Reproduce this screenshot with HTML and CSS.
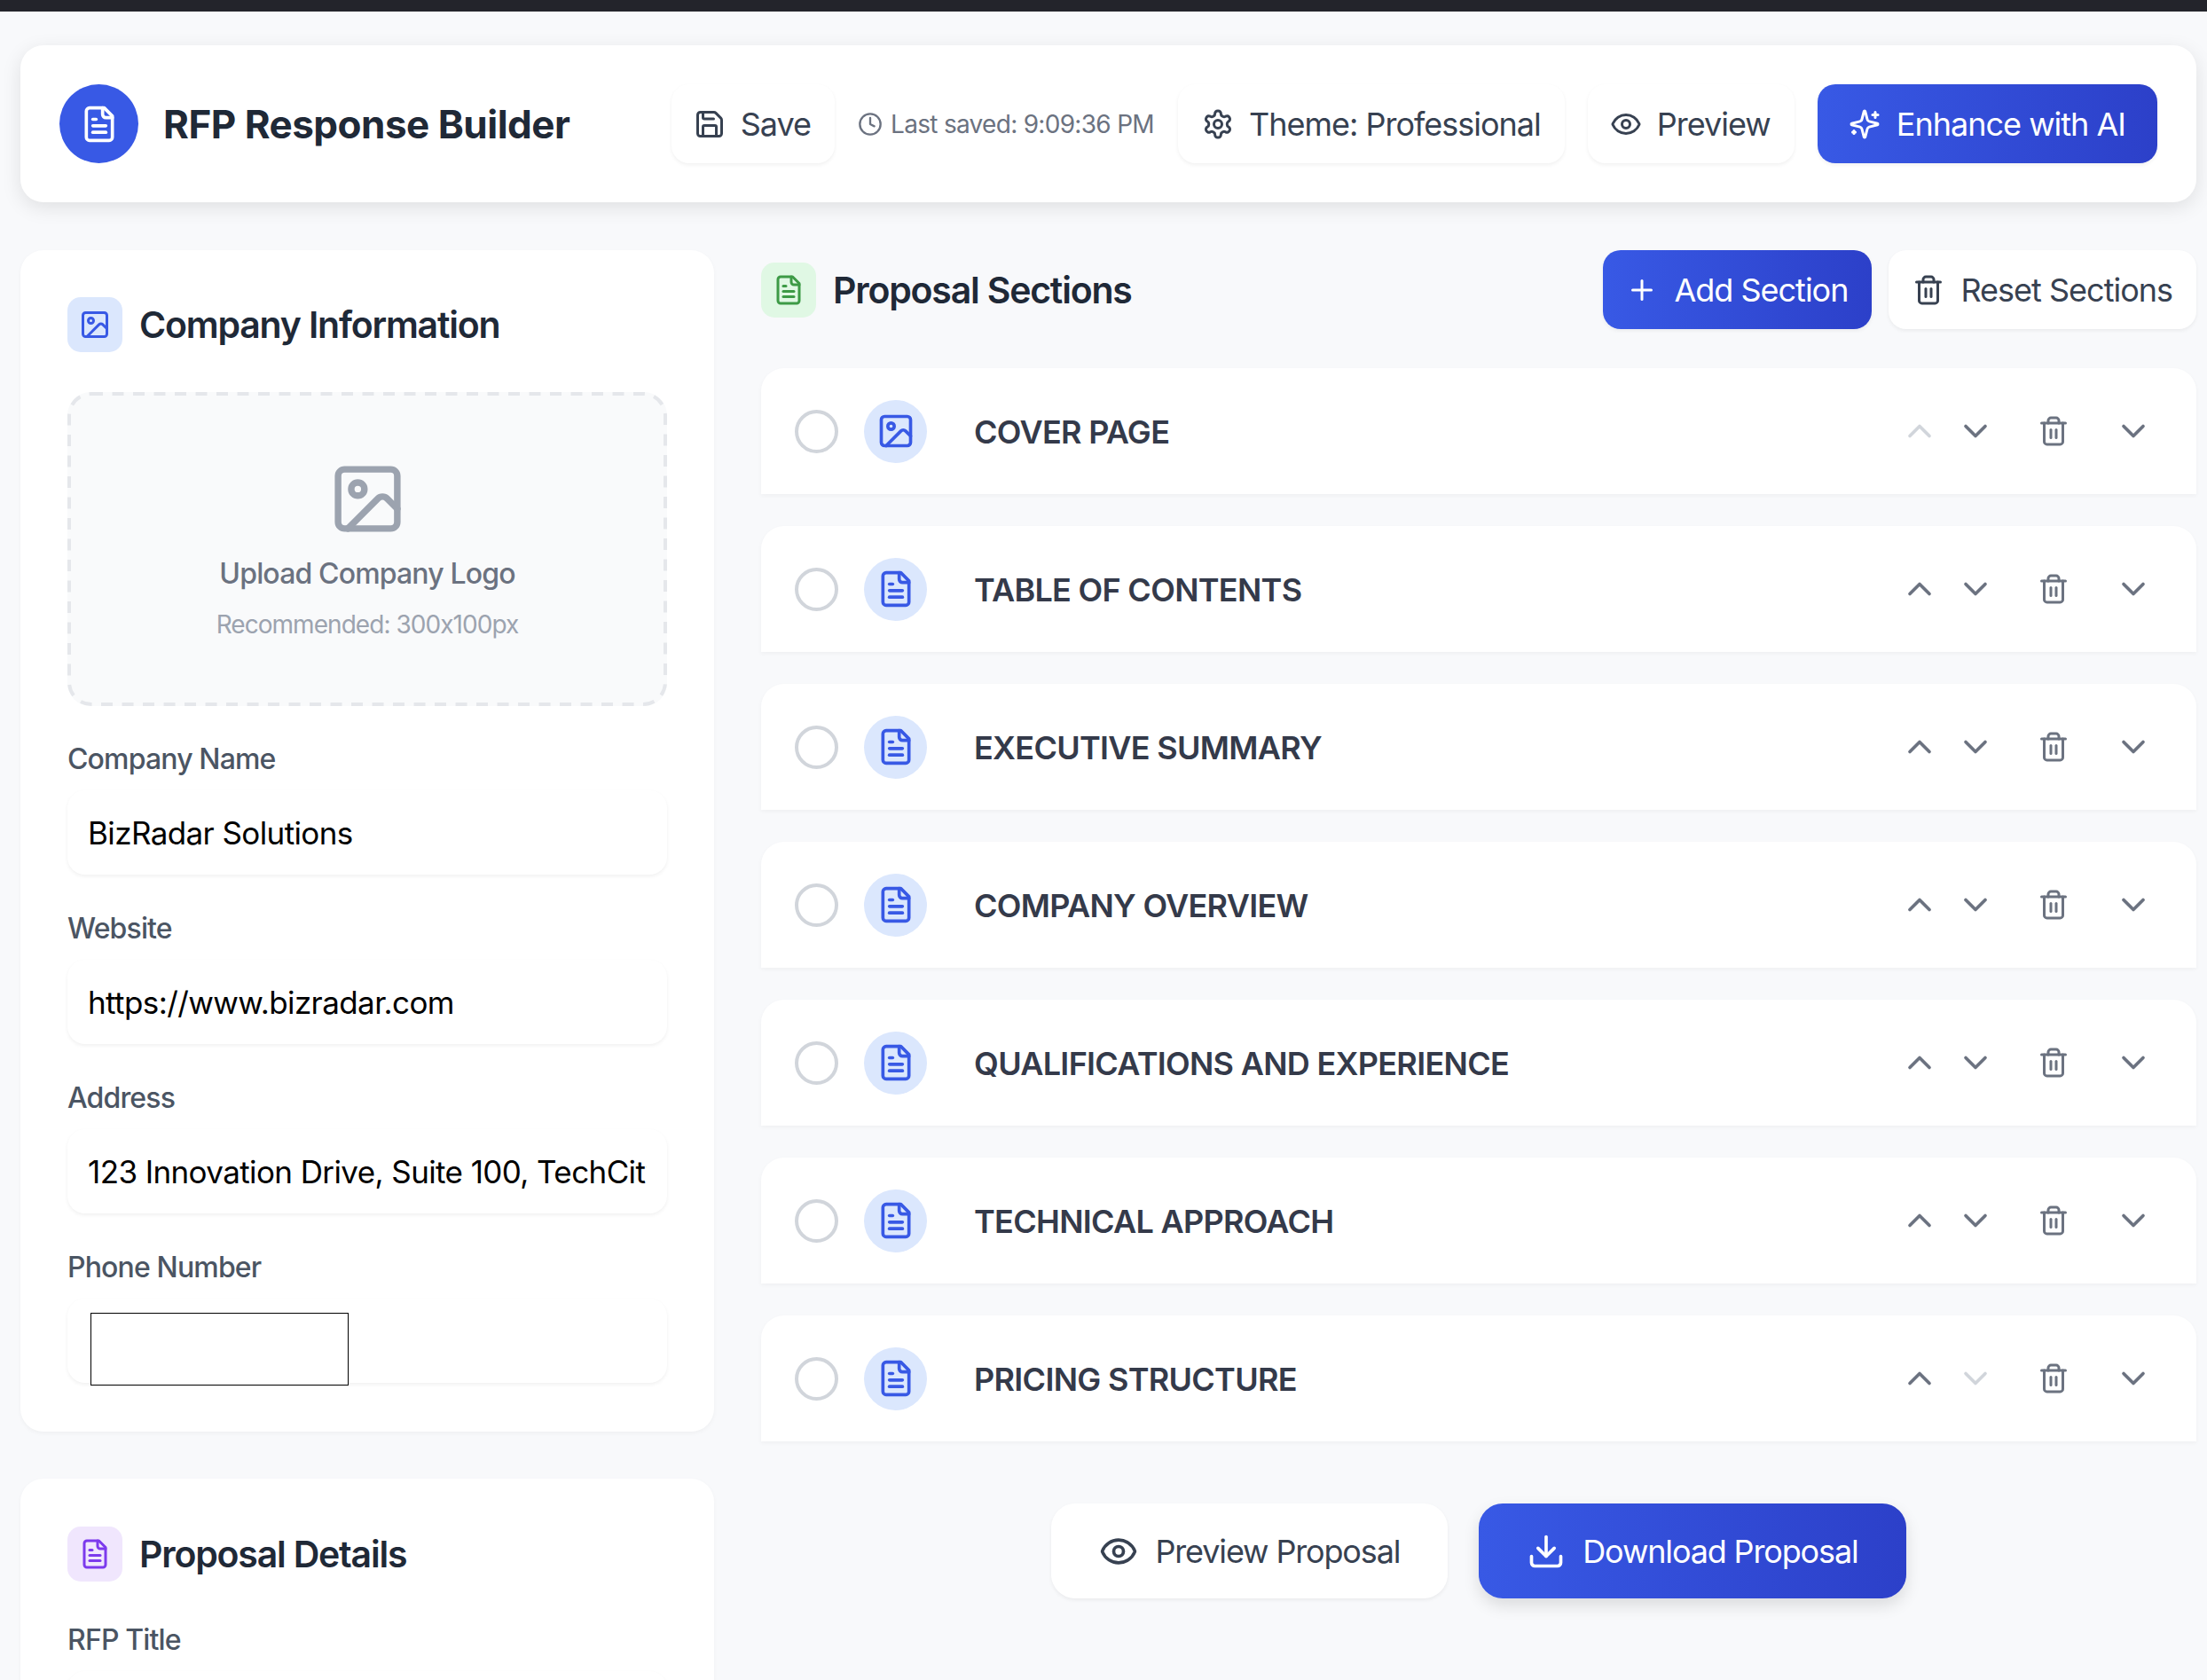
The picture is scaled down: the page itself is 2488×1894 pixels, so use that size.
FILE: index.html
```html
<!DOCTYPE html>
<html lang="en">
<head>
    <meta charset="UTF-8">
    <meta name="viewport" content="width=device-width, initial-scale=1.0">
    <title>RFP Response Builder</title>
    <link rel="stylesheet" href="styles.css">
</head>
<body>
<svg class="sprite" xmlns="http://www.w3.org/2000/svg">
    <symbol id="i-doc" viewBox="0 0 24 24"><path d="M15 2H6a2 2 0 0 0-2 2v16a2 2 0 0 0 2 2h12a2 2 0 0 0 2-2V7Z"/><path d="M14 2v4a2 2 0 0 0 2 2h4"/><path d="M10 9H8"/><path d="M16 13H8"/><path d="M16 17H8"/></symbol>
    <symbol id="i-image" viewBox="0 0 24 24"><rect x="3" y="3" width="18" height="18" rx="2"/><circle cx="9" cy="9" r="2"/><path d="m21 15-3.086-3.086a2 2 0 0 0-2.828 0L6 21"/></symbol>
    <symbol id="i-save" viewBox="0 0 24 24"><path d="M15.2 3a2 2 0 0 1 1.4.6l3.8 3.8a2 2 0 0 1 .6 1.4V19a2 2 0 0 1-2 2H5a2 2 0 0 1-2-2V5a2 2 0 0 1 2-2z"/><path d="M17 21v-7a1 1 0 0 0-1-1H8a1 1 0 0 0-1 1v7"/><path d="M7 3v4a1 1 0 0 0 1 1h7"/></symbol>
    <symbol id="i-clock" viewBox="0 0 24 24"><circle cx="12" cy="12" r="10"/><path d="M12 6v6l4 2"/></symbol>
    <symbol id="i-gear" viewBox="0 0 24 24"><path d="M12.22 2h-.44a2 2 0 0 0-2 2v.18a2 2 0 0 1-1 1.73l-.43.25a2 2 0 0 1-2 0l-.15-.08a2 2 0 0 0-2.73.73l-.22.38a2 2 0 0 0 .73 2.73l.15.1a2 2 0 0 1 1 1.72v.51a2 2 0 0 1-1 1.74l-.15.09a2 2 0 0 0-.73 2.73l.22.38a2 2 0 0 0 2.73.73l.15-.08a2 2 0 0 1 2 0l.43.25a2 2 0 0 1 1 1.73V20a2 2 0 0 0 2 2h.44a2 2 0 0 0 2-2v-.18a2 2 0 0 1 1-1.73l.43-.25a2 2 0 0 1 2 0l.15.08a2 2 0 0 0 2.73-.73l.22-.39a2 2 0 0 0-.73-2.73l-.15-.08a2 2 0 0 1-1-1.74v-.5a2 2 0 0 1 1-1.74l.15-.09a2 2 0 0 0 .73-2.73l-.22-.38a2 2 0 0 0-2.73-.73l-.15.08a2 2 0 0 1-2 0l-.43-.25a2 2 0 0 1-1-1.73V4a2 2 0 0 0-2-2z"/><circle cx="12" cy="12" r="3"/></symbol>
    <symbol id="i-eye" viewBox="0 0 24 24"><path d="M2.062 12.348a1 1 0 0 1 0-.696 10.75 10.75 0 0 1 19.876 0 1 1 0 0 1 0 .696 10.75 10.75 0 0 1-19.876 0"/><circle cx="12" cy="12" r="3"/></symbol>
    <symbol id="i-spark" viewBox="0 0 24 24"><path d="M9.937 15.5A2 2 0 0 0 8.5 14.063l-6.135-1.582a.5.5 0 0 1 0-.962L8.5 9.936A2 2 0 0 0 9.937 8.5l1.582-6.135a.5.5 0 0 1 .963 0L14.063 8.5A2 2 0 0 0 15.5 9.937l6.135 1.581a.5.5 0 0 1 0 .964L15.5 14.063a2 2 0 0 0-1.437 1.437l-1.582 6.135a.5.5 0 0 1-.963 0z"/><path d="M20 3v4"/><path d="M22 5h-4"/><path d="M4 17v2"/><path d="M5 18H3"/></symbol>
    <symbol id="i-plus" viewBox="0 0 24 24"><path d="M5 12h14"/><path d="M12 5v14"/></symbol>
    <symbol id="i-trash" viewBox="0 0 24 24"><path d="M3 6h18"/><path d="M19 6v14c0 1-1 2-2 2H7c-1 0-2-1-2-2V6"/><path d="M8 6V4c0-1 1-2 2-2h4c1 0 2 1 2 2v2"/><path d="M10 11v6"/><path d="M14 11v6"/></symbol>
    <symbol id="i-up" viewBox="0 0 24 24"><path d="m18 15-6-6-6 6"/></symbol>
    <symbol id="i-down" viewBox="0 0 24 24"><path d="m6 9 6 6 6-6"/></symbol>
    <symbol id="i-download" viewBox="0 0 24 24"><path d="M21 15v4a2 2 0 0 1-2 2H5a2 2 0 0 1-2-2v-4"/><path d="m7 10 5 5 5-5"/><path d="M12 15V3"/></symbol>
</svg>

<div class="topbar"></div>

<div class="page">
    <header class="header">
        <div class="brand">
            <div class="brand-icon"><svg class="icon icon-row"><use href="#i-doc"/></svg></div>
            <h1>RFP Response Builder</h1>
        </div>
        <div class="header-actions">
            <button class="btn"><svg class="icon"><use href="#i-save"/></svg>Save</button>
            <span class="last-saved"><svg class="icon icon-sm"><use href="#i-clock"/></svg>Last saved: 9:09:36 PM</span>
            <button class="btn btn-theme"><svg class="icon"><use href="#i-gear"/></svg>Theme: Professional</button>
            <button class="btn"><svg class="icon"><use href="#i-eye"/></svg>Preview</button>
            <button class="btn btn-primary btn-enhance"><svg class="icon"><use href="#i-spark"/></svg>Enhance with AI</button>
        </div>
    </header>

    <div class="columns">
        <aside class="sidebar">
            <section class="card">
                <div class="card-title">
                    <span class="title-icon tint-blue"><svg class="icon icon-title"><use href="#i-image"/></svg></span>
                    <h2>Company Information</h2>
                </div>
                <div class="dropzone">
                    <svg class="dash" width="676" height="354"><rect x="2" y="2" width="672" height="350" rx="25"/></svg>
                    <svg class="icon icon-upload"><use href="#i-image"/></svg>
                    <p class="drop-main">Upload Company Logo</p>
                    <p class="drop-hint">Recommended: 300x100px</p>
                </div>
                <label class="field-label">Company Name</label>
                <input class="field" type="text" value="BizRadar Solutions">
                <label class="field-label">Website</label>
                <input class="field" type="text" value="https://www.bizradar.com">
                <label class="field-label">Address</label>
                <input class="field" type="text" value="123 Innovation Drive, Suite 100, TechCity, CA 94000">
                <label class="field-label">Phone Number</label>
                <div class="field phone-wrap"><input class="phone-input" type="text"></div>
            </section>

            <section class="card">
                <div class="card-title">
                    <span class="title-icon tint-purple"><svg class="icon icon-title"><use href="#i-doc"/></svg></span>
                    <h2>Proposal Details</h2>
                </div>
                <label class="field-label">RFP Title</label>
                <input class="field" type="text">
            </section>
        </aside>

        <main class="sections">
            <div class="sections-head">
                <span class="title-icon tint-green"><svg class="icon icon-title"><use href="#i-doc"/></svg></span>
                <h2>Proposal Sections</h2>
                <button class="btn btn-primary btn-add"><svg class="icon"><use href="#i-plus"/></svg>Add Section</button>
                <button class="btn btn-reset"><svg class="icon"><use href="#i-trash"/></svg>Reset Sections</button>
            </div>

            <div class="row">
                <span class="radio"></span>
                <span class="row-icon"><svg class="icon icon-row"><use href="#i-image"/></svg></span>
                <span class="row-title">Cover Page</span>
                <div class="row-tools">
                    <svg class="icon icon-chev off"><use href="#i-up"/></svg>
                    <svg class="icon icon-chev"><use href="#i-down"/></svg>
                    <svg class="icon icon-trash"><use href="#i-trash"/></svg>
                    <svg class="icon icon-chev"><use href="#i-down"/></svg>
                </div>
            </div>
            <div class="row">
                <span class="radio"></span>
                <span class="row-icon"><svg class="icon icon-row"><use href="#i-doc"/></svg></span>
                <span class="row-title">Table of Contents</span>
                <div class="row-tools">
                    <svg class="icon icon-chev"><use href="#i-up"/></svg>
                    <svg class="icon icon-chev"><use href="#i-down"/></svg>
                    <svg class="icon icon-trash"><use href="#i-trash"/></svg>
                    <svg class="icon icon-chev"><use href="#i-down"/></svg>
                </div>
            </div>
            <div class="row">
                <span class="radio"></span>
                <span class="row-icon"><svg class="icon icon-row"><use href="#i-doc"/></svg></span>
                <span class="row-title">Executive Summary</span>
                <div class="row-tools">
                    <svg class="icon icon-chev"><use href="#i-up"/></svg>
                    <svg class="icon icon-chev"><use href="#i-down"/></svg>
                    <svg class="icon icon-trash"><use href="#i-trash"/></svg>
                    <svg class="icon icon-chev"><use href="#i-down"/></svg>
                </div>
            </div>
            <div class="row">
                <span class="radio"></span>
                <span class="row-icon"><svg class="icon icon-row"><use href="#i-doc"/></svg></span>
                <span class="row-title">Company Overview</span>
                <div class="row-tools">
                    <svg class="icon icon-chev"><use href="#i-up"/></svg>
                    <svg class="icon icon-chev"><use href="#i-down"/></svg>
                    <svg class="icon icon-trash"><use href="#i-trash"/></svg>
                    <svg class="icon icon-chev"><use href="#i-down"/></svg>
                </div>
            </div>
            <div class="row">
                <span class="radio"></span>
                <span class="row-icon"><svg class="icon icon-row"><use href="#i-doc"/></svg></span>
                <span class="row-title">Qualifications and Experience</span>
                <div class="row-tools">
                    <svg class="icon icon-chev"><use href="#i-up"/></svg>
                    <svg class="icon icon-chev"><use href="#i-down"/></svg>
                    <svg class="icon icon-trash"><use href="#i-trash"/></svg>
                    <svg class="icon icon-chev"><use href="#i-down"/></svg>
                </div>
            </div>
            <div class="row">
                <span class="radio"></span>
                <span class="row-icon"><svg class="icon icon-row"><use href="#i-doc"/></svg></span>
                <span class="row-title">Technical Approach</span>
                <div class="row-tools">
                    <svg class="icon icon-chev"><use href="#i-up"/></svg>
                    <svg class="icon icon-chev"><use href="#i-down"/></svg>
                    <svg class="icon icon-trash"><use href="#i-trash"/></svg>
                    <svg class="icon icon-chev"><use href="#i-down"/></svg>
                </div>
            </div>
            <div class="row">
                <span class="radio"></span>
                <span class="row-icon"><svg class="icon icon-row"><use href="#i-doc"/></svg></span>
                <span class="row-title">Pricing Structure</span>
                <div class="row-tools">
                    <svg class="icon icon-chev"><use href="#i-up"/></svg>
                    <svg class="icon icon-chev off"><use href="#i-down"/></svg>
                    <svg class="icon icon-trash"><use href="#i-trash"/></svg>
                    <svg class="icon icon-chev"><use href="#i-down"/></svg>
                </div>
            </div>

            <div class="footer-actions">
                <button class="btn btn-big"><svg class="icon icon-big"><use href="#i-eye"/></svg>Preview Proposal</button>
                <button class="btn btn-primary btn-big btn-glow"><svg class="icon icon-big"><use href="#i-download"/></svg>Download Proposal</button>
            </div>
        </main>
    </div>
</div>
</body>
</html>
```

FILE: styles.css
```css
* {
    box-sizing: border-box;
    font-feature-settings: "calt" 0;
}
html, body {
    margin: 0;
    height: 1894px;
    overflow: hidden;
}
body {
    font-family: Inter, "Noto Sans", sans-serif;
    background-color: #f8f9fb;
    color: #1f2937;
}
.sprite {
    display: none;
}
.topbar {
    height: 13px;
    background: #23242b;
}
.page {
    padding: 38px 12px 0 23px;
}
.icon {
    width: 36px;
    height: 36px;
    flex: none;
    fill: none;
    stroke: currentColor;
    stroke-width: 2;
    stroke-linecap: round;
    stroke-linejoin: round;
}
.icon-sm {
    width: 28px;
    height: 28px;
}
.icon-title {
    width: 36px;
    height: 36px;
}
.icon-row {
    width: 44px;
    height: 44px;
}
.icon-upload {
    width: 89px;
    height: 89px;
    color: #9ca3af;
}
.icon-big {
    width: 44px;
    height: 44px;
}

/* buttons */
.btn {
    display: inline-flex;
    align-items: center;
    gap: 17px;
    height: 89px;
    padding: 0 27px 0 25px;
    font-family: inherit;
    font-size: 36px;
    letter-spacing: -1px;
    color: #374151;
    background: #fff;
    border: none;
    border-radius: 20px;
    box-shadow: 0 2px 4px rgba(0, 0, 0, 0.06);
    white-space: nowrap;
}
.btn-primary {
    color: #fff;
    background: linear-gradient(90deg, #3859e5, #2c40c9);
}
.btn-theme {
    padding-left: 27px;
}
.btn-enhance {
    gap: 18px;
    padding: 0 36px 0 35px;
}
.btn-add {
    gap: 18px;
    padding: 0 27px 0 26px;
}
.btn-reset {
    gap: 18px;
    padding: 0 27px;
}
.btn-big {
    height: 107px;
    padding: 0 54px;
    gap: 19px;
    letter-spacing: -1.15px;
    border-radius: 27px;
}
.btn-glow {
    box-shadow: 0 8px 18px rgba(0, 0, 0, 0.12);
}

/* header */
.header {
    display: flex;
    align-items: center;
    justify-content: space-between;
    height: 177px;
    padding: 0 44px;
    background: #fff;
    border-radius: 26px;
    box-shadow: 0 6px 22px rgba(0, 0, 0, 0.1);
}
.brand {
    display: flex;
    align-items: center;
    gap: 28px;
}
.brand-icon {
    display: flex;
    align-items: center;
    justify-content: center;
    width: 89px;
    height: 89px;
    color: #fff;
    background: #3859e5;
    border-radius: 50%;
}
h1 {
    margin: 0;
    font-size: 44px;
    font-weight: 700;
    letter-spacing: -0.5px;
    color: #1f2937;
}
.header-actions {
    display: flex;
    align-items: center;
    gap: 26px;
}
.last-saved {
    display: flex;
    align-items: center;
    gap: 9px;
    margin-right: 1px;
    font-size: 28px;
    letter-spacing: -0.7px;
    color: #6b7280;
}

/* columns */
.columns {
    display: grid;
    grid-template-columns: 782px 1fr;
    gap: 53px;
    margin-top: 54px;
}
.card {
    padding: 53px 53px 55px;
    margin-bottom: 53px;
    background: #fff;
    border-radius: 26px;
    box-shadow: 0 2px 5px rgba(0, 0, 0, 0.04);
}
.card + .card {
    padding-top: 54px;
}
.card-title {
    display: flex;
    align-items: center;
    gap: 19px;
    margin-bottom: 45px;
}
.card-title + .field-label {
    margin-top: 9px;
}
h2 {
    margin: 0;
    font-size: 41px;
    font-weight: 600;
    letter-spacing: -1.2px;
    color: #1f2937;
}
.title-icon {
    display: flex;
    align-items: center;
    justify-content: center;
    width: 62px;
    height: 62px;
    border-radius: 15px;
}
.tint-blue {
    background: #dbe7fd;
    color: #3859e5;
}
.tint-purple {
    background: #f0e6fd;
    color: #7c3aed;
}
.tint-green {
    background: #e0f8e4;
    color: #3d9a46;
}

/* upload box */
.dropzone {
    position: relative;
    display: flex;
    flex-direction: column;
    align-items: center;
    justify-content: center;
    height: 354px;
    margin-bottom: 39px;
    background: #f9fafb;
    border-radius: 26px;
}
.dash {
    position: absolute;
    top: 0;
    left: 0;
}
.dash rect {
    fill: none;
    stroke: #e5e7eb;
    stroke-width: 4;
    stroke-dasharray: 13 10.5;
}
.drop-main {
    margin: 20px 0 0;
    font-size: 32px;
    font-weight: 500;
    letter-spacing: -0.85px;
    color: #6b7280;
}
.drop-hint {
    margin: 21px 0 0;
    font-size: 28px;
    letter-spacing: -0.95px;
    color: #9ca3af;
}

/* form */
.field-label {
    display: block;
    height: 41px;
    margin-bottom: 15px;
    line-height: 41px;
    font-size: 32px;
    font-weight: 500;
    letter-spacing: -0.85px;
    color: #4b5563;
}
.field {
    display: block;
    width: 100%;
    height: 95px;
    margin-bottom: 40px;
    padding: 0 23px;
    font-family: inherit;
    font-size: 35px;
    letter-spacing: -0.6px;
    color: #000;
    background: #fff;
    border: none;
    border-radius: 20px;
    box-shadow: 0 2px 4px rgba(0, 0, 0, 0.06);
    outline: none;
}
.field:last-child {
    margin-bottom: 0;
}
.phone-wrap {
    padding: 16px 0 0 26px;
}
.phone-input {
    display: block;
    width: 291px;
    height: 82px;
    background: #fff;
    border: 1px solid #000;
    border-radius: 0;
    outline: none;
}

/* section list */
.sections-head {
    display: flex;
    align-items: center;
    gap: 19px;
    margin-bottom: 44px;
}
.btn-add {
    margin-left: auto;
}
.row {
    display: flex;
    align-items: center;
    height: 142px;
    margin-bottom: 36px;
    padding: 0 49px 0 38px;
    background: #fff;
    border-radius: 26px 26px 0 0;
    box-shadow: 0 2px 5px rgba(0, 0, 0, 0.04);
}
.radio {
    width: 49px;
    height: 49px;
    border: 4.5px solid #d1d5db;
    border-radius: 50%;
}
.row-icon {
    display: flex;
    align-items: center;
    justify-content: center;
    width: 71px;
    height: 71px;
    margin-left: 29px;
    color: #3859e5;
    background: #dbe7fd;
    border-radius: 50%;
}
.row-title {
    margin-left: 53px;
    padding-top: 2px;
    font-size: 36px;
    font-weight: 600;
    letter-spacing: -0.7px;
    color: #343a4a;
    text-transform: uppercase;
}
.row-tools {
    display: flex;
    align-items: center;
    margin-left: auto;
    color: #6b7280;
}
.icon-chev {
    width: 44px;
    height: 44px;
}
.icon-chev + .icon-chev {
    margin-left: 19px;
}
.icon-chev.off {
    color: #d1d5db;
}
.icon-trash {
    width: 36px;
    height: 36px;
    margin: 0 50px 0 48px;
}
.footer-actions {
    display: flex;
    justify-content: center;
    gap: 35px;
    margin-top: 70px;
}
```
